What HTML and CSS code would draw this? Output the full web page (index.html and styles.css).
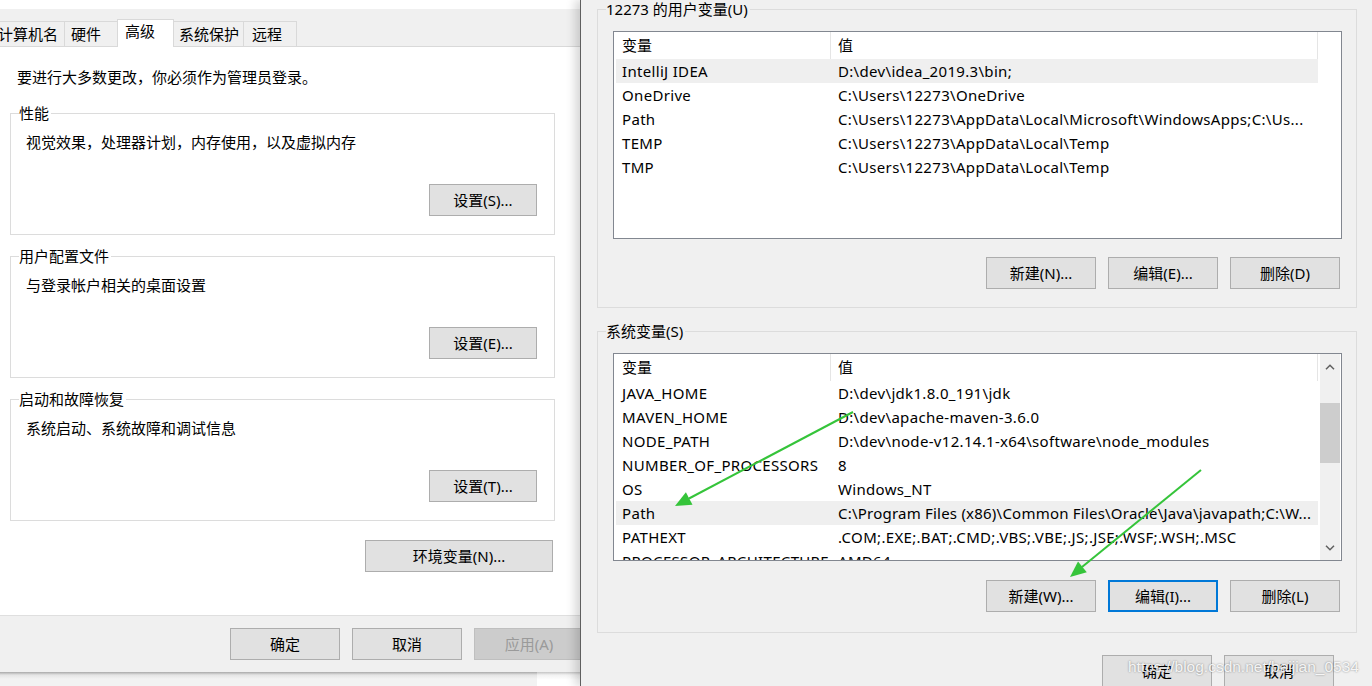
FILE: index.html
```html
<!DOCTYPE html>
<html lang="zh-CN">
<head>
<meta charset="utf-8">
<title>系统属性 - 环境变量</title>
<link rel="stylesheet" href="styles.css">
</head>
<body>
<div class="screen">
  <section class="sysprops">
    <div class="titlegap"></div>
    <div class="tabbar">
      <div class="tab tab-name">计算机名</div>
      <div class="tab tab-hw">硬件</div>
      <div class="tab tab-active">高级</div>
      <div class="tab tab-prot">系统保护</div>
      <div class="tab tab-remote">远程</div>
    </div>
    <div class="panel">
      <p class="intro">要进行大多数更改，你必须作为管理员登录。</p>
      <fieldset class="group">
        <legend>性能</legend>
        <p class="desc">视觉效果，处理器计划，内存使用，以及虚拟内存</p>
        <div class="group-actions"><button class="btn btn-set">设置(S)...</button></div>
      </fieldset>
      <fieldset class="group group-next">
        <legend>用户配置文件</legend>
        <p class="desc">与登录帐户相关的桌面设置</p>
        <div class="group-actions"><button class="btn btn-set">设置(E)...</button></div>
      </fieldset>
      <fieldset class="group group-next">
        <legend>启动和故障恢复</legend>
        <p class="desc">系统启动、系统故障和调试信息</p>
        <div class="group-actions"><button class="btn btn-set">设置(T)...</button></div>
      </fieldset>
      <div class="env-row"><button class="btn btn-env">环境变量(N)...</button></div>
    </div>
    <div class="dlg-foot">
      <button class="btn">确定</button>
      <button class="btn">取消</button>
      <button class="btn btn-disabled">应用(A)</button>
    </div>
    <div class="below"><div class="below-gray"></div></div>
  </section>

  <section class="envvars">
    <fieldset class="vgroup">
      <legend>12273 的用户变量(U)</legend>
      <div class="listview">
        <div class="lv-body">
          <div class="lv-head"><span class="c1">变量</span><span class="c2">值</span></div>
          <div class="lv-row is-hl"><span class="c1">IntelliJ IDEA</span><span class="c2">D:\dev\idea_2019.3\bin;</span></div>
          <div class="lv-row"><span class="c1">OneDrive</span><span class="c2">C:\Users\12273\OneDrive</span></div>
          <div class="lv-row"><span class="c1">Path</span><span class="c2">C:\Users\12273\AppData\Local\Microsoft\WindowsApps;C:\Us...</span></div>
          <div class="lv-row"><span class="c1">TEMP</span><span class="c2">C:\Users\12273\AppData\Local\Temp</span></div>
          <div class="lv-row"><span class="c1">TMP</span><span class="c2">C:\Users\12273\AppData\Local\Temp</span></div>
        </div>
      </div>
      <div class="btn-row">
        <button class="btn">新建(N)...</button>
        <button class="btn">编辑(E)...</button>
        <button class="btn">删除(D)</button>
      </div>
    </fieldset>

    <fieldset class="vgroup vgroup-sys">
      <legend>系统变量(S)</legend>
      <div class="listview">
        <div class="lv-body">
          <div class="lv-head"><span class="c1">变量</span><span class="c2">值</span></div>
          <div class="lv-row"><span class="c1">JAVA_HOME</span><span class="c2">D:\dev\jdk1.8.0_191\jdk</span></div>
          <div class="lv-row"><span class="c1">MAVEN_HOME</span><span class="c2">D:\dev\apache-maven-3.6.0</span></div>
          <div class="lv-row"><span class="c1">NODE_PATH</span><span class="c2">D:\dev\node-v12.14.1-x64\software\node_modules</span></div>
          <div class="lv-row"><span class="c1">NUMBER_OF_PROCESSORS</span><span class="c2">8</span></div>
          <div class="lv-row"><span class="c1">OS</span><span class="c2">Windows_NT</span></div>
          <div class="lv-row is-hl"><span class="c1">Path</span><span class="c2 c2-tight">C:\Program Files (x86)\Common Files\Oracle\Java\javapath;C:\W...</span></div>
          <div class="lv-row"><span class="c1">PATHEXT</span><span class="c2">.COM;.EXE;.BAT;.CMD;.VBS;.VBE;.JS;.JSE;.WSF;.WSH;.MSC</span></div>
          <div class="lv-row"><span class="c1">PROCESSOR_ARCHITECTURE</span><span class="c2">AMD64</span></div>
        </div>
        <div class="scrollbar">
          <div class="sb-btn sb-up"><svg width="10" height="6" viewBox="0 0 10 6"><polyline points="1,5.2 5,1.2 9,5.2" fill="none" stroke="#606060" stroke-width="1.5"/></svg></div>
          <div class="sb-track"><div class="sb-thumb"></div></div>
          <div class="sb-btn sb-down"><svg width="10" height="6" viewBox="0 0 10 6"><polyline points="1,0.8 5,4.8 9,0.8" fill="none" stroke="#606060" stroke-width="1.5"/></svg></div>
        </div>
      </div>
      <div class="btn-row">
        <button class="btn">新建(W)...</button>
        <button class="btn btn-focus">编辑(I)...</button>
        <button class="btn">删除(L)</button>
      </div>
    </fieldset>

    <div class="final-row">
      <button class="btn">确定</button>
      <button class="btn">取消</button>
    </div>
  </section>

  <svg class="arrows" width="1372" height="686" viewBox="0 0 1372 686">
    <line x1="853" y1="412" x2="689" y2="498.5" stroke="#35c43a" stroke-width="2"/>
    <polygon points="675,506 692.5,504.7 685.9,492.3" fill="#35c43a"/>
    <line x1="1201" y1="470" x2="1082" y2="567" stroke="#35c43a" stroke-width="2"/>
    <polygon points="1070,577 1086.8,572.3 1078,561.5" fill="#35c43a"/>
  </svg>
  <div class="watermark">https://blog.csdn.net/baijian_0534</div>
</div>
</body>
</html>
```

FILE: styles.css
```css
* { box-sizing: border-box; }

html, body {
  margin: 0;
  padding: 0;
  background: #ffffff;
}

body {
  font-family: "Noto Sans", "Noto Sans CJK SC", sans-serif;
  font-size: 15px;
  line-height: 19px;
  color: #000;
}

.screen {
  position: relative;
  width: 1372px;
  height: 686px;
  display: flex;
  overflow: hidden;
}

/* ---------- left dialog: 系统属性 ---------- */
.sysprops {
  width: 580px;
  flex: none;
  display: flex;
  flex-direction: column;
  background: #fff;
  overflow: hidden;
}

.titlegap {
  height: 9px;
  background: #ffffff;
}

.tabbar {
  height: 37px;
  background: #f0f0f0;
  display: flex;
  align-items: flex-end;
  margin-left: -8px;
}

.tab {
  height: 25px;
  border: 1px solid #d9d9d9;
  border-bottom: none;
  background: #f0f0f0;
  padding: 3px 0 0 6px;
  margin-left: -1px;
  white-space: nowrap;
}
.tab-name { width: 73px; margin-left: 0; padding-left: 5px; }
.tab-hw { width: 54px; }
.tab-active {
  width: 57px;
  height: 28px;
  margin-bottom: -1px;
  background: #fff;
  padding: 2px 0 0 7px;
  position: relative;
  z-index: 1;
}
.tab-prot { width: 71px; padding-left: 5px; }
.tab-remote { width: 54px; padding-left: 8px; }

.panel {
  flex: 1;
  border-top: 1px solid #d9d9d9;
  background: #fff;
  padding: 21px 0 0 10px;
}

.intro {
  margin: 0 0 0 7px;
}

.group {
  margin: 17px 0 0 0;
  width: 545px;
  border: 1px solid #dcdcdc;
  padding: 10px 17px 18px 15px;
  min-width: 0;
}
.group-next { margin-top: 12px; }

.group legend,
.vgroup legend {
  padding: 0 2px 0 0;
  margin-left: -7px;
  line-height: 19px;
}

.desc { margin: 0; }

.group-actions {
  display: flex;
  justify-content: flex-end;
  margin-top: 32px;
}

.env-row {
  display: flex;
  justify-content: flex-end;
  width: 543px;
  margin-top: 19px;
}

.dlg-foot {
  height: 57px;
  border-top: 1px solid #dfdfdf;
  background: #f0f0f0;
  display: flex;
  gap: 12px;
  padding: 12px 0 0 230px;
}

.below {
  height: 14px;
  display: flex;
  background: linear-gradient(to bottom, #c4c4c4 0, #f2f2f2 3px, #ffffff 8px);
}
.below-gray {
  width: 537px;
  background: linear-gradient(to bottom, #a9a9a9 0, #e4e4e4 3px, #f2f2f2 7px);
}

/* ---------- buttons ---------- */
.btn {
  flex: none;
  width: 110px;
  height: 32px;
  border: 1px solid #adadad;
  background: #e1e1e1;
  font: inherit;
  color: #000;
  padding: 0;
  text-align: center;
  white-space: nowrap;
}
.btn-set { width: 108px; }
.btn-env { width: 188px; }
.btn-disabled {
  background: #cccccc;
  border-color: #bfbfbf;
  color: #9a9a9a;
}
.btn-focus {
  border: 2px solid #0078d7;
}

/* ---------- right dialog: 环境变量 ---------- */
.envvars {
  flex: 1;
  min-width: 0;
  background: #f0f0f0;
  border-left: 1px solid #5f5f5f;
  box-shadow: -5px 0 9px rgba(0, 0, 0, 0.16);
  padding: 0 15px 0 16px;
}

.vgroup {
  margin: 0;
  border: 1px solid #dcdcdc;
  padding: 12px 14px 18px 15px;
  min-width: 0;
}
.vgroup-sys {
  margin-top: 14px;
  padding-bottom: 20px;
}

.listview {
  height: 208px;
  border: 1px solid #828790;
  background: #fff;
  display: flex;
  overflow: hidden;
}

.lv-body {
  width: 704px;
  flex: none;
  padding-left: 2px;
  overflow: hidden;
}

.lv-head,
.lv-row {
  display: grid;
  grid-template-columns: 215px 487px;
  width: 702px;
  white-space: nowrap;
}

.lv-head {
  height: 27px;
  line-height: 27px;
}
.lv-head .c1,
.lv-head .c2 {
  border-right: 1px solid #e5e5e5;
}

.lv-row {
  height: 24px;
  line-height: 24px;
  letter-spacing: 0.32px;
}
.lv-row.is-hl { background: #efefef; }

.c1 { padding-left: 6px; overflow: hidden; }
.c2 { padding-left: 7px; overflow: hidden; }
.c2-tight { letter-spacing: 0.22px; }

.scrollbar {
  width: 20px;
  flex: none;
  margin-left: 2px;
  background: #f0f0f0;
  display: flex;
  flex-direction: column;
}
.sb-btn {
  display: flex;
  align-items: center;
  justify-content: center;
}
.sb-up { height: 26px; }
.sb-down { height: 24px; }
.sb-track { flex: 1; padding-top: 23px; }
.sb-thumb {
  height: 60px;
  background: #cdcdcd;
}

.btn-row {
  display: flex;
  justify-content: flex-end;
  gap: 12px;
  margin-top: 18px;
  padding-right: 2px;
}
.vgroup-sys .btn-row { margin-top: 19px; }

.final-row {
  display: flex;
  justify-content: flex-end;
  gap: 12px;
  margin-top: 22px;
  padding-right: 23px;
}

/* ---------- overlays ---------- */
.arrows {
  position: absolute;
  left: 0;
  top: 0;
  pointer-events: none;
}

.watermark {
  position: absolute;
  left: 1128px;
  top: 657px;
  font-family: "Liberation Sans", Arial, sans-serif;
  font-size: 15.5px;
  line-height: 20px;
  color: rgba(255, 255, 255, 0.9);
  text-shadow: 0 0 2px rgba(0, 0, 0, 0.45);
  white-space: nowrap;
  pointer-events: none;
}
```
